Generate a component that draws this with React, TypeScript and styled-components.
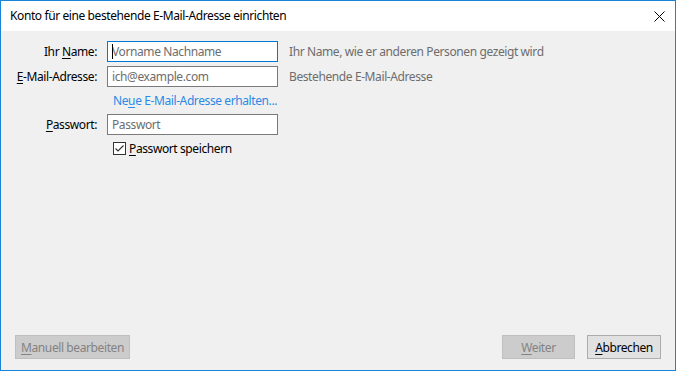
import React from "react";
import styled, { createGlobalStyle } from "styled-components";

const Global = createGlobalStyle`
  html, body { margin: 0; padding: 0; background: #ffffff; }
  body { font-family: "Segoe UI", "Noto Sans", "Liberation Sans", sans-serif; font-size: 12px; letter-spacing: -0.4px; }
  * { box-sizing: border-box; }
`;

const Window = styled.div`
  width: 676px;
  height: 371px;
  border: 1px solid #1883d7;
  display: flex;
  flex-direction: column;
  background: #f0f0f0;
  color: #000;
`;

const TitleBar = styled.div`
  height: 30px;
  flex: none;
  background: #ffffff;
  display: flex;
  align-items: center;
  justify-content: space-between;
  padding: 0 10px 0 9px;
`;

const Title = styled.div`
  font-size: 12px;
  color: #000;
  line-height: 16px;
  margin-top: -1px;
`;

const CloseButton = styled.div`
  width: 12px;
  height: 12px;
  display: flex;
  align-items: center;
  justify-content: center;
`;

const Content = styled.div`
  flex: 1;
  display: flex;
  flex-direction: column;
  justify-content: space-between;
  padding: 10px 14px 11px 14px;
`;

const Form = styled.div`
  display: grid;
  grid-template-columns: 82px 171px auto;
  column-gap: 10px;
  row-gap: 4px;
  align-items: center;
`;

const Label = styled.label`
  justify-self: end;
  white-space: nowrap;
  line-height: 16px;
`;

const U = styled.span`
  text-decoration: underline;
  text-underline-offset: 2px;
`;

const FieldWrap = styled.div`
  position: relative;
  height: 21px;
`;

const Input = styled.input<{ $focused?: boolean }>`
  width: 171px;
  height: 21px;
  border: 1px solid ${(p) => (p.$focused ? "#0078d7" : "#7a7a7a")};
  background: #ffffff;
  padding: 0 4px;
  margin: 0;
  font-family: inherit;
  font-size: 12px;
  letter-spacing: -0.4px;
  color: #000;
  outline: none;
  &::placeholder { color: #6d6d6d; opacity: 1; }
`;

const Caret = styled.span`
  position: absolute;
  left: 5px;
  top: 3px;
  width: 1px;
  height: 15px;
  background: #000;
`;

const Hint = styled.div`
  color: #6d6d6d;
  white-space: nowrap;
  margin-left: 1px;
`;

const Empty = styled.div``;

const LinkCell = styled.div`
  padding-left: 6px;
  height: 19px;
  display: flex;
  align-items: center;
`;

const Link = styled.a`
  color: #2a8ae6;
  text-decoration: none;
  white-space: nowrap;
  cursor: pointer;
`;

const CheckRow = styled.div`
  grid-column: 2 / 4;
  padding-left: 6px;
  margin-top: 2px;
  display: flex;
  align-items: center;
  gap: 3px;
  height: 15px;
  white-space: nowrap;
`;

const Box = styled.span`
  width: 13px;
  height: 13px;
  border: 1px solid #333333;
  background: #ffffff;
  display: flex;
  align-items: center;
  justify-content: center;
`;

const Footer = styled.div`
  display: flex;
  align-items: center;
  justify-content: space-between;
`;

const Group = styled.div`
  display: flex;
  gap: 12px;
`;

const Button = styled.button<{ $w: number; $disabled?: boolean }>`
  width: ${(p) => p.$w}px;
  height: 24px;
  margin: 0;
  padding: 0 4px;
  white-space: nowrap;
  font-family: inherit;
  font-size: 12px;
  letter-spacing: -0.4px;
  border: 1px solid ${(p) => (p.$disabled ? "#bfbfbf" : "#adadad")};
  background: ${(p) => (p.$disabled ? "#cccccc" : "#e1e1e1")};
  color: ${(p) => (p.$disabled ? "#838383" : "#000000")};
`;

export default function App() {
  return (
    <>
      <Global />
      <Window>
        <TitleBar>
          <Title>Konto für eine bestehende E-Mail-Adresse einrichten</Title>
          <CloseButton>
            <svg width="11" height="11" viewBox="0 0 11 11">
              <path d="M0.5 0.5 L10.5 10.5 M10.5 0.5 L0.5 10.5" stroke="#000" strokeWidth="1" />
            </svg>
          </CloseButton>
        </TitleBar>
        <Content>
          <Form>
            <Label>
              Ihr <U>N</U>ame:
            </Label>
            <FieldWrap>
              <Input $focused placeholder="Vorname Nachname" readOnly />
              <Caret />
            </FieldWrap>
            <Hint>Ihr Name, wie er anderen Personen gezeigt wird</Hint>

            <Label>
              <U>E</U>-Mail-Adresse:
            </Label>
            <FieldWrap>
              <Input placeholder="ich@example.com" readOnly />
            </FieldWrap>
            <Hint>Bestehende E-Mail-Adresse</Hint>

            <Empty />
            <LinkCell>
              <Link>
                Ne<U>u</U>e E-Mail-Adresse erhalten...
              </Link>
            </LinkCell>
            <Empty />

            <Label>
              <U>P</U>asswort:
            </Label>
            <FieldWrap>
              <Input placeholder="Passwort" readOnly />
            </FieldWrap>
            <Empty />

            <Empty />
            <CheckRow>
              <Box>
                <svg width="11" height="11" viewBox="0 0 11 11">
                  <path d="M1.5 5.5 L4 8 L9.5 2.5" stroke="#333" strokeWidth="1.2" fill="none" />
                </svg>
              </Box>
              <span>
                <U>P</U>asswort speichern
              </span>
            </CheckRow>
          </Form>
          <Footer>
            <Button $w={115} $disabled>
              <U>M</U>anuell bearbeiten
            </Button>
            <Group>
              <Button $w={73} $disabled>
                <U>W</U>eiter
              </Button>
              <Button $w={74}>
                <U>A</U>bbrechen
              </Button>
            </Group>
          </Footer>
        </Content>
      </Window>
    </>
  );
}
